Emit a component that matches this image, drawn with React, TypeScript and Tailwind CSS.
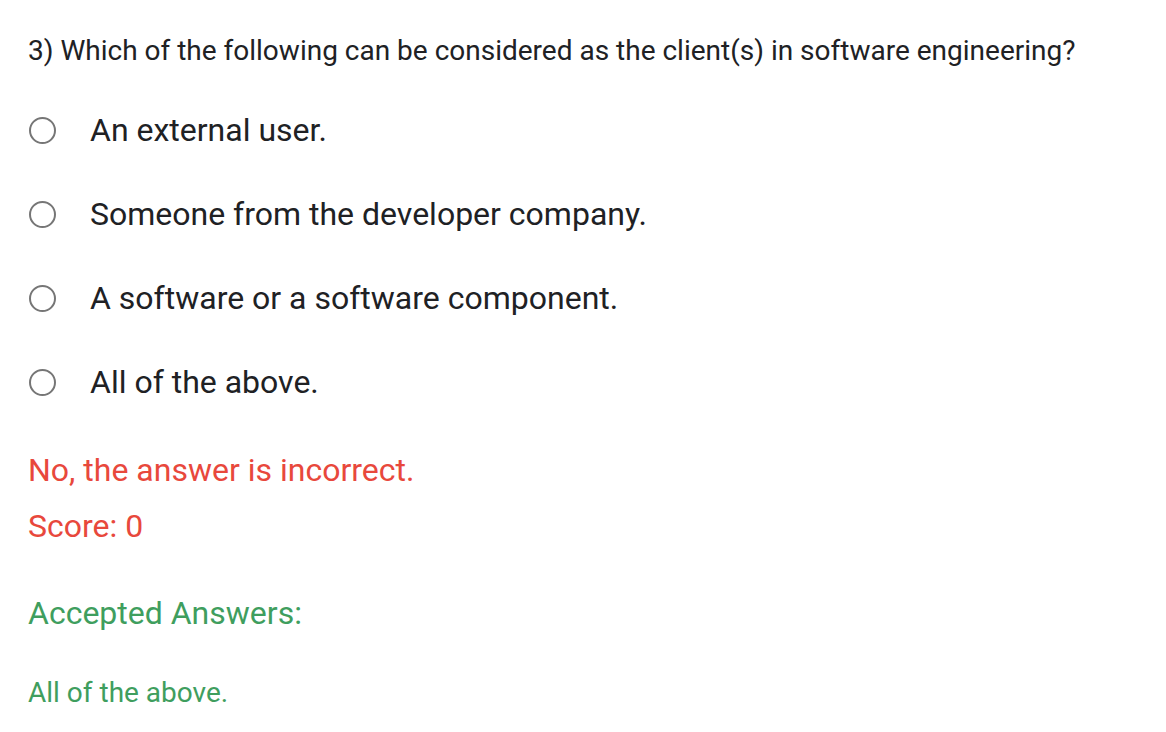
import React from "react";

const options = [
  "An external user.",
  "Someone from the developer company.",
  "A software or a software component.",
  "All of the above.",
];

export default function App() {
  return (
    <div
      className="w-[1166px] h-[732px] bg-white pl-[28px] pt-[33px]"
      style={{ fontFamily: "Roboto, 'Noto Sans', sans-serif" }}
    >
      <div className="text-[28px] leading-[36px] text-[#202124]">
        3) Which of the following can be considered as the client(s) in software engineering?
      </div>
      <div className="mt-[43px] flex flex-col gap-[48px]">
        {options.map((o) => (
          <div key={o} className="flex items-center h-[36px]">
            <span className="ml-px w-[27px] h-[27px] rounded-full border-2 border-[#767676] shrink-0" />
            <span className="ml-[34px] text-[32px] leading-[36px] text-[#202124]">{o}</span>
          </div>
        ))}
      </div>
      <div className="mt-[52px] text-[32px] leading-[36px] text-[#e8483c]">No, the answer is incorrect.</div>
      <div className="mt-[20px] text-[32px] leading-[36px] text-[#e8483c]">Score: 0</div>
      <div className="mt-[51px] text-[32px] leading-[36px] text-[#3f9e5e]">Accepted Answers:</div>
      <div className="mt-[44px] text-[28px] leading-[36px] text-[#3f9e5e]">All of the above.</div>
    </div>
  );
}
